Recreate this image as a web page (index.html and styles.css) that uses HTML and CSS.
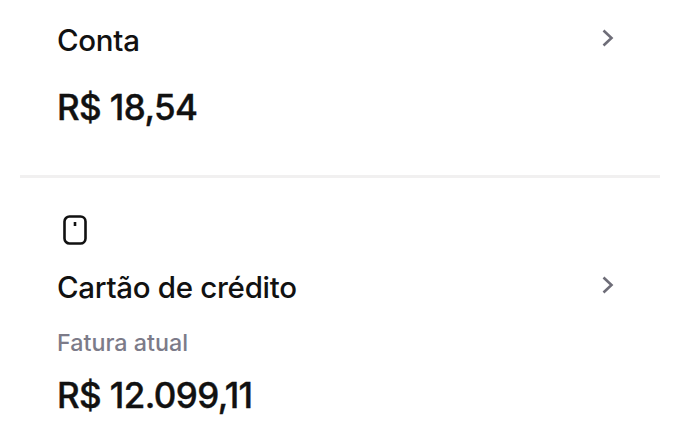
FILE: index.html
```html
<!DOCTYPE html>
<html lang="pt-BR">
<head>
<meta charset="utf-8">
<title>Conta</title>
<link rel="stylesheet" href="styles.css">
</head>
<body>
<section class="account">
  <div class="row">
    <span class="title">Conta</span>
    <svg class="chev" viewBox="0 0 12 18" width="12" height="18"><path d="M1.5 1.5l8 7.5-8 7.5" fill="none" stroke="#6e6d78" stroke-width="2.6"/></svg>
  </div>
  <div class="amount">R$ 18,54</div>
</section>
<hr class="divider">
<section class="card">
  <svg class="card-icon" viewBox="0 0 24 30" width="24" height="30"><rect x="1.5" y="1.5" width="21" height="27" rx="5" fill="none" stroke="#111" stroke-width="2.6"/><rect x="10.7" y="7" width="2.6" height="4" fill="#111"/></svg>
  <div class="row">
    <span class="title">Cartão de crédito</span>
    <svg class="chev" viewBox="0 0 12 18" width="12" height="18"><path d="M1.5 1.5l8 7.5-8 7.5" fill="none" stroke="#6e6d78" stroke-width="2.6"/></svg>
  </div>
  <div class="label">Fatura atual</div>
  <div class="amount">R$ 12.099,11</div>
</section>
</body>
</html>
```
FILE: styles.css
```css
html, body { margin: 0; padding: 0; background: #fff; }
body { width: 680px; height: 443px; overflow: hidden; font-family: "Inter", "Liberation Sans", sans-serif; color: #111; }
.account { padding: 24px 66px 0 57px; height: 152px; box-sizing: border-box; }
.row { display: flex; justify-content: space-between; align-items: center; height: 32px; }
.chev { margin-top: -5px; }
.title { font-size: 29.5px; font-weight: 500; letter-spacing: -0.3px; }
.amount { font-size: 35px; font-weight: 500; letter-spacing: -0.6px; line-height: 40px; -webkit-text-stroke: 0.4px #111; }
.account .amount { margin-top: 31px; }
.divider { border: 0; height: 3px; background: #f1f0f0; margin: 23px 20px 0; }
.card { padding: 37px 66px 0 57px; }
.card-icon { display: block; margin: 0 0 26px 6px; }
.label { font-size: 23.3px; font-weight: 500; color: #7c7b89; margin-top: 27px; line-height: 26px; }
.card .amount { margin-top: 19px; }
```
